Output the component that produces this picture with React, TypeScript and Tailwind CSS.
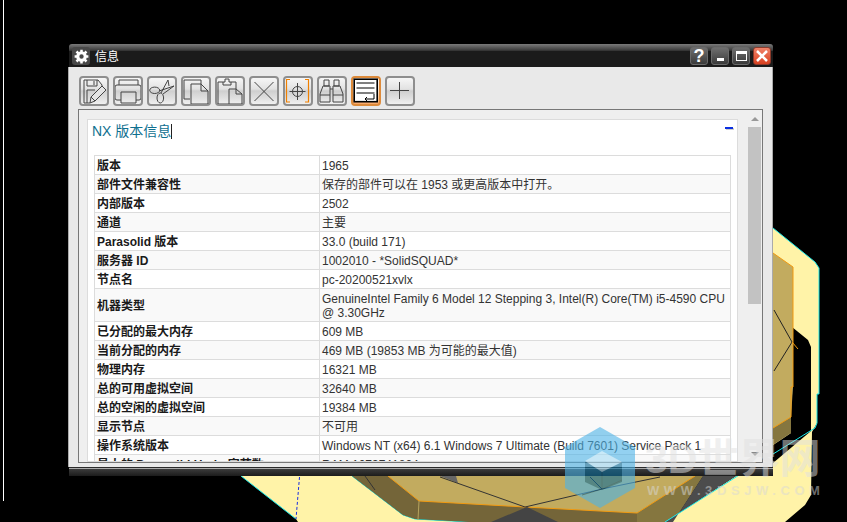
import React from "react";

const rows: [string, string][] = [
  ["版本", "1965"],
  ["部件文件兼容性", "保存的部件可以在 1953 或更高版本中打开。"],
  ["内部版本", "2502"],
  ["通道", "主要"],
  ["Parasolid 版本", "33.0 (build 171)"],
  ["服务器 ID", "1002010 - *SolidSQUAD*"],
  ["节点名", "pc-20200521xvlx"],
  ["机器类型", "GenuineIntel Family 6 Model 12 Stepping 3, Intel(R) Core(TM) i5-4590 CPU @ 3.30GHz"],
  ["已分配的最大内存", "609 MB"],
  ["当前分配的内存", "469 MB (19853 MB 为可能的最大值)"],
  ["物理内存", "16321 MB"],
  ["总的可用虚拟空间", "32640 MB"],
  ["总的空闲的虚拟空间", "19384 MB"],
  ["显示节点", "不可用"],
  ["操作系统版本", "Windows NT (x64) 6.1 Windows 7 Ultimate (Build 7601) Service Pack 1"],
  ["最大的 Parasolid Undo 字节数", "RAM 1073741824"],
];

function Btn({ children, active }: { children: React.ReactNode; active?: boolean }) {
  return (
    <div
      className={
        "w-[30px] h-[30px] rounded-[4px] border-2 flex items-center justify-center " +
        (active
          ? "border-[#dd8a3a] bg-[linear-gradient(#fdf6ef_0%,#fbe3cc_50%,#f8a868_100%)]"
          : "border-[#8e8e8e] bg-[linear-gradient(#f6f6f6_0%,#e2e2e2_42%,#cfcfcf_50%,#e0e0e0_78%,#f0f0f0_100%)]")
      }
    >
      <svg width="26" height="26" viewBox="0 0 26 26" fill="none" stroke="#444" strokeWidth="1">
        {children}
      </svg>
    </div>
  );
}

function TitleBtn({ children, red }: { children: React.ReactNode; red?: boolean }) {
  return (
    <div
      className={
        "w-[18px] h-[18px] rounded-[3px] border flex items-center justify-center " +
        (red
          ? "border-[#8d3a2a] bg-[linear-gradient(#f0836a,#d8401f)]"
          : "border-[#6a6a6a] bg-[linear-gradient(#6e6e6e,#3a3a3a)]")
      }
    >
      {children}
    </div>
  );
}

export default function App() {
  return (
    <div
      className="relative w-[847px] h-[522px] bg-black overflow-hidden"
      style={{ fontFamily: '"Liberation Sans", "Noto Sans CJK SC", sans-serif' }}
    >
      <svg className="absolute inset-0" width="847" height="522" viewBox="0 0 847 522">
        <line x1="3.5" y1="0" x2="3.5" y2="501" stroke="#ffffff" />
        {/* lower-left yellow */}
        <polygon points="241,476 296,519 298,522 470,522 415,519 403,515 352,476" fill="#fff3a8" />
        <path d="M241,476 L296,519" stroke="#19e6e6" fill="none" />
        <path d="M352,476 L403,515 L415,519 L470,522" stroke="#19e6e6" fill="none" />
        <path d="M299.5,477 L296,519" stroke="#1a2ee0" strokeDasharray="3 2" fill="none" />
        {/* olive and tan faces */}
        <polygon points="352,476 403,515 415,519 470,522 673,522 703,476" fill="#746539" />
        <polygon points="637,513 693,476 703,476 673,522 637,522" fill="#85763f" />
        <polygon points="388,476 419,501 525,507 637,513 695,476" fill="#c2ab5f" />
        <path d="M388,476 L419,501 L525,507 L637,513 L695,476" stroke="#f29a10" fill="none" />
        <line x1="419" y1="501" x2="418" y2="520" stroke="#b5a45f" />
        <path d="M365,476 L375,490" stroke="#333" fill="none" />
        <polygon points="491,522 527,507 558,522" fill="#444" />
        <polygon points="440,476 456,476 458,483" fill="#666" />
        <path d="M440,477 L525,507 L602,489 L660,477 M602,489 L590,477" stroke="#333" fill="none" />
        {/* right yellow */}
        <polygon points="773,228 815,262 819,268 819,394 817,394 817,423 812,432 811,495 805,505 785,522 665,522 736,476 773,476" fill="#fff3a8" />
        <path d="M773,228 L815,262 L819,268 L819,394 L817,394 L817,423" stroke="#19e6e6" fill="none" />
        <polygon points="665,522 673,522 703,476 736,476" fill="#4c4c4c" />
        <polygon points="792,327 808,340 811,347 811,431 773,463 773,445 791,433 791,417" fill="#000" />
        <path d="M817,423 L815,428 L736,477 L665,522" stroke="#19e6e6" fill="none" />
        <polygon points="773,253 793,267 793,387 791,417 773,428" fill="#c2ab5f" />
        <polygon points="791,417 791,433 773,445 773,428" fill="#85763f" />
        <path d="M773,253 L793,267 L793,387 L791,387 L791,417 L773,428" stroke="#f29a10" fill="none" />
        <path d="M774,310 L792,342 L774,371" stroke="#222" fill="none" />
        <path d="M792,342 L798,349" stroke="#f29a10" fill="none" />
      </svg>

      <div className="absolute left-[68px] top-[44px] w-[705px] h-[432px] flex flex-col">
        <div className="ml-[1px] h-[23px] shrink-0 rounded-t-[3px] bg-[linear-gradient(#7a7a7a_0%,#3a3a3a_28%,#1b1b1b_30%,#1b1b1b_100%)] flex items-center pl-[3px] pr-[2px] pt-[1px]">
          <div className="w-[18px] h-[18px] rounded-[3px] bg-[#484848] flex items-center justify-center">
            <svg width="15" height="15" viewBox="0 0 24 24" fill="none" stroke="#fff" strokeWidth="5">
              <circle cx="12" cy="12" r="6" />
              <path d="M12 1v4M12 19v4M1 12h4M19 12h4M4 4l3 3M17 17l3 3M4 20l3-3M17 7l3-3" strokeWidth="4" />
            </svg>
          </div>
          <span className="ml-[5px] text-[12px] leading-[14px] text-white mt-[1px]">信息</span>
          <div className="ml-auto flex gap-[3px]">
            <TitleBtn>
              <span className="text-white text-[18px] font-bold leading-none">?</span>
            </TitleBtn>
            <TitleBtn>
              <div className="w-[7px] h-[3px] bg-white mt-[7px]" />
            </TitleBtn>
            <TitleBtn>
              <div className="w-[11px] h-[10px] border border-white border-t-[3px]" />
            </TitleBtn>
            <TitleBtn red>
              <svg width="14" height="14" viewBox="0 0 14 14" stroke="#fff" strokeWidth="2.5">
                <path d="M2 2l10 10M12 2L2 12" />
              </svg>
            </TitleBtn>
          </div>
        </div>

        <div className="flex-1 min-h-0 bg-[#e9e9e9] border-x border-[#aaa] pl-[9px] pr-[9px] pb-[4px] flex flex-col">
          <div className="h-[30px] mt-[9px] shrink-0 flex gap-[4px] pl-[1px]">
            <Btn>
              <path d="M9 25H3V2h14l4 5v3M6 2v6h10V2M13 3v4M6 25V12h8" />
              <path d="M9 25l1-6 11-11 4 4-11 11z" fill="#e4e4e4" />
              <path d="M10 19l4 4" />
            </Btn>
            <Btn>
              <path d="M4 7V2h19v5M6 22H2a2 2 0 0 1-2-2V9a2 2 0 0 1 2-2h22a2 2 0 0 1 2 2v11a2 2 0 0 1-2 2h-3M6 14h15v11H6z" />
            </Btn>
            <Btn>
              <ellipse cx="5.7" cy="12.3" rx="5" ry="3.2" />
              <ellipse cx="11.3" cy="20" rx="3.3" ry="5" />
              <path d="M10 13L25 8 14 16M12 15L19 2l1 6" />
            </Btn>
            <Btn>
              <path d="M7 21H1V2h17v4M8 6h10l7 7v13H8zM18 6v7h7" />
            </Btn>
            <Btn>
              <path d="M12 26H1V4h5M14 4h5v7M6 7V4h2V1h4v3h2v3zM12 11h7l6 5v10H12zM19 11v5h6" />
            </Btn>
            <Btn>
              <path d="M3.5 4l19 19M22.5 4l-19 19" />
            </Btn>
            <Btn>
              <circle cx="12.5" cy="13.5" r="5" />
              <path d="M12.5 5v17M4.5 13.5h16" />
              <path d="M5 1.5H1.5v22.5H5M20 1.5h3.5V24H20" stroke="#f08000" strokeWidth="1.2" />
            </Btn>
            <Btn>
              <path d="M5 2h5v6H5zM15 2h5v6h-5zM4 8h7v8M21 8h-7v8M4 8L1 16v8h10v-8M21 8l3 8v8H14v-8M1 17h10M14 17h10M11 11h3" />
            </Btn>
            <Btn active>
              <rect x="1.2" y="1.2" width="23" height="22.5" fill="#fff" stroke="#000" strokeWidth="1.6" />
              <path d="M3.5 5h18M3.5 10h18M3.5 15h18M21 16v5h-9M14 19l-2 2 2 2" stroke="#000" />
            </Btn>
            <Btn>
              <path d="M12.5 4v17M3 12.5h19" />
            </Btn>
          </div>

          <div className="mt-[3px] flex-1 min-h-0 border border-[#777] bg-[#efefef] flex overflow-hidden">
            <div className="ml-[8px] mt-[9px] w-[651px] bg-white border border-[#dcdcdc] relative overflow-hidden shrink-0">
              <div className="h-[23px] pl-[4px] flex items-center text-[14px] text-[#0f7090]">
                NX 版本信息
                <span className="w-px h-[15px] bg-[#222]" />
              </div>
              <div className="absolute right-[4px] top-[7px] w-[8px] h-[2px] bg-[#0b2fe0] shadow-[1px_1px_0_#ccc]" />
              <div className="ml-[6px] mt-[12px] w-[637px] border-l border-t border-[#dcdcdc] text-[12px] leading-[14px] text-[#333]">
                {rows.map(([k, v], i) => (
                  <div key={k} className={"flex border-b border-[#dcdcdc] " + (i % 2 ? "bg-[#f9f9f9]" : "bg-white")}>
                    <div className="w-[225px] shrink-0 pl-[2px] pt-[3px] pb-[1px] border-r border-[#dcdcdc] font-bold text-[#1a1a1a] flex items-center whitespace-nowrap">{k}</div>
                    <div className="flex-1 pl-[2px] pr-[1px] pt-[3px] pb-[1px] border-r border-[#dcdcdc] flex items-center">{v}</div>
                  </div>
                ))}
              </div>
            </div>
            <div className="relative w-[13px] ml-[10px] shrink-0">
              <div className="absolute left-[3px] top-[7px] w-0 h-0 border-x-[4px] border-x-transparent border-b-[4px] border-b-[#999]" />
              <div className="absolute left-0 right-0 top-[17px] h-[177px] bg-[#c2c2c2]" />
              <div className="absolute left-[3px] bottom-[6px] w-0 h-0 border-x-[4px] border-x-transparent border-t-[4px] border-t-[#888]" />
            </div>
          </div>
        </div>

        <div className="ml-[1px] h-[9px] shrink-0 bg-[linear-gradient(#2a2a2a_0%,#2a2a2a_12%,#aaaaaa_13%,#aaaaaa_24%,#3a3a3a_25%,#1c1c1c_100%)]" />
      </div>

      <svg className="absolute inset-0 pointer-events-none" width="847" height="522" viewBox="0 0 847 522">
        <g opacity="0.6">
          <polygon points="600,427 635,447 635,488 600,508 565,488 565,447" fill="#4db4e8" />
          <polygon points="585,462 602,452 622,463 622,482 602,490 585,482" fill="#0f6f9c" />
          <polygon points="585,461 602,451 622,462 602,472" fill="#a6dcf5" />
          <path d="M602,472 V489 M582,495 L602,489 L622,480" stroke="#0f5a80" fill="none" />
        </g>
      </svg>
      <div className="absolute left-[645px] top-[437px] text-[41px] leading-[44px] font-bold text-[#e0e0e0] opacity-50 pointer-events-none whitespace-nowrap">3D世界网</div>
      <div className="absolute left-[647px] top-[483px] text-[13px] leading-[15px] font-bold tracking-[4.6px] text-[#d8d8d8] opacity-50 pointer-events-none whitespace-nowrap">WWW.3DSJW.COM</div>
    </div>
  );
}
